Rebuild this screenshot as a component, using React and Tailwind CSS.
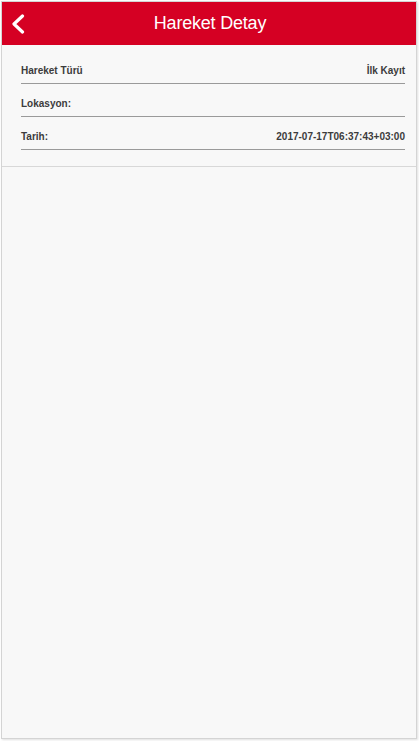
import React from "react";

const rows = [
  { label: "Hareket Türü", value: "İlk Kayıt" },
  { label: "Lokasyon:", value: "" },
  { label: "Tarih:", value: "2017-07-17T06:37:43+03:00" },
];

export default function App() {
  return (
    <div className="w-[419px] h-[741px] bg-white pl-[1px] pr-[2px] pt-[1px] pb-[2px]" style={{ fontFamily: '"Liberation Sans", Arial, sans-serif' }}>
      <div className="h-full flex flex-col border border-[#d4d4d4] bg-[#f8f8f8] shadow-[1px_1px_2px_rgba(0,0,0,0.12)]">
        <div className="relative h-[43px] shrink-0 bg-[#d50023] flex items-center justify-center">
          <svg className="absolute left-[9px] top-[12px]" width="14" height="20" viewBox="0 0 14 20">
            <path d="M11.5 2 L3 10 L11.5 18" fill="none" stroke="white" strokeWidth="3.2" strokeLinecap="round" strokeLinejoin="round" />
          </svg>
          <span className="text-white text-[18px] tracking-[-0.2px] pl-[2px]">Hareket Detay</span>
        </div>

        <div className="pl-[19px] pr-[11px] pt-[14px] pb-[16px] border-b border-[#d8d8d8]">
          {rows.map((r) => (
            <div key={r.label} className="h-[33px] flex items-end justify-between border-b border-[#9a9a9a] pb-[6px] leading-[12px] first:h-[25px]">
              <span className="text-[10px] font-bold text-[#3c3c3c]">{r.label}</span>
              <span className="text-[10px] font-bold text-[#3c3c3c]">{r.value}</span>
            </div>
          ))}
        </div>
      </div>
    </div>
  );
}
